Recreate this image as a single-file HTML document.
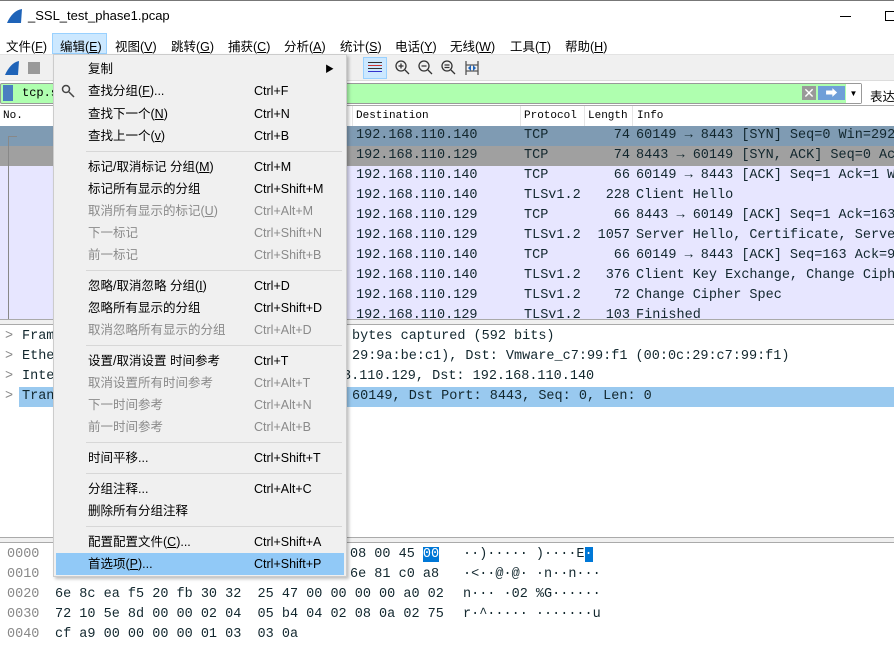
<!DOCTYPE html>
<html><head><meta charset="utf-8"><style>
*{margin:0;padding:0;box-sizing:border-box}
body{width:894px;height:626px;overflow:hidden;background:#fff;position:relative;font-family:"Liberation Sans","Noto Sans CJK SC",sans-serif;font-size:12px;color:#000}
.a{position:absolute;white-space:nowrap}
.mono{font-family:"Liberation Mono","Noto Sans CJK SC",monospace;font-size:13.5px}
.row{position:absolute;left:0;width:894px;height:20px}
.mi{position:absolute;left:0;width:293px;height:22px;line-height:22px}
.mi .l{position:absolute;left:34px}
.mi .r{position:absolute;left:200px}
.dis{color:#8a8a8a}
.sep{position:absolute;left:32px;width:256px;height:1px;background:#d7d7d7}
</style></head><body>
<!-- title -->
<div class="a" style="left:0;top:0;width:894px;height:1px;background:#777"></div>
<svg class="a" style="left:6px;top:8px" width="18" height="16"><path d="M1 15 C4 8 9 2 16 1 L15 15 Z" fill="#1e63b8"/></svg>
<div class="a" style="left:28px;top:8px;font-size:13px">_SSL_test_phase1.pcap</div>
<div class="a" style="left:840px;top:16px;width:11px;height:1px;background:#000"></div>
<div class="a" style="left:885px;top:11px;width:10px;height:10px;border:1px solid #000"></div>
<!-- menubar -->
<div class="a" style="left:0;top:33px;width:894px;height:21px;font-size:12.5px">
<span class="a" style="left:6px;top:3px">文件(<u>F</u>)</span>
<span class="a" style="left:52px;top:0;width:55px;height:21px;background:#cce8ff;border:1px solid #99d1ff"></span>
<span class="a" style="left:60px;top:3px">编辑(<u>E</u>)</span>
<span class="a" style="left:115px;top:3px">视图(<u>V</u>)</span>
<span class="a" style="left:171px;top:3px">跳转(<u>G</u>)</span>
<span class="a" style="left:228px;top:3px">捕获(<u>C</u>)</span>
<span class="a" style="left:284px;top:3px">分析(<u>A</u>)</span>
<span class="a" style="left:340px;top:3px">统计(<u>S</u>)</span>
<span class="a" style="left:395px;top:3px">电话(<u>Y</u>)</span>
<span class="a" style="left:450px;top:3px">无线(<u>W</u>)</span>
<span class="a" style="left:510px;top:3px">工具(<u>T</u>)</span>
<span class="a" style="left:565px;top:3px">帮助(<u>H</u>)</span>
</div>
<!-- toolbar -->
<div class="a" style="left:0;top:54px;width:894px;height:27px;background:#f0f0f0;border-top:1px solid #e3e3e3;border-bottom:1px solid #dcdcdc"></div>
<svg class="a" style="left:4px;top:60px" width="16" height="16"><path d="M1 15 C4 8 9 2 15 1 L14 15 Z" fill="#1e63b8"/></svg>
<div class="a" style="left:28px;top:62px;width:12px;height:12px;background:#999"></div>
<div class="a" style="left:363px;top:57px;width:24px;height:22px;background:#cce8ff;border:1px solid #99d1ff"></div>
<div class="a" style="left:368px;top:62px;width:14px;height:1px;background:#333;box-shadow:0 3px #c33,0 6px #333,0 9px #33c"></div>
<svg class="a" style="left:394px;top:59px" width="90" height="18" fill="none" stroke="#333" stroke-width="1.3"><circle cx="7" cy="7" r="5"/><path d="M11 11l4 4M4.5 7h5M7 4.5v5"/><circle cx="30" cy="7" r="5"/><path d="M34 11l4 4M27.5 7h5"/><circle cx="53" cy="7" r="5"/><path d="M57 11l4 4M50.5 6h5M50.5 8.5h5"/><path d="M72 2v14M84 2v14M72 6h12M72 12h12" stroke="#555"/><path d="M74 9l3-3v6zM82 9l-3-3v6z" fill="#1e63b8" stroke="none"/></svg>
<!-- filter -->
<div class="a" style="left:0;top:83px;width:862px;height:21px;border:1px solid #999;background:#afffaf;border-radius:2px"></div>
<div class="a" style="left:3px;top:85px;width:10px;height:16px;background:#4a7ec0"></div>
<div class="a mono" style="left:22px;top:86px;font-size:12px">tcp.s</div>
<div class="a" style="left:802px;top:86px;width:14px;height:14px;background:#999;color:#fff;font-size:14px;line-height:14px;text-align:center">✕</div>
<div class="a" style="left:818px;top:86px;width:27px;height:14px;background:#6f9fd8;color:#fff;font-size:12px;line-height:14px;text-align:center">➡</div>
<div class="a" style="left:846px;top:84px;width:15px;height:19px;background:#fff;font-size:8px;line-height:19px;text-align:center">▼</div>
<div class="a" style="left:870px;top:86px;font-size:12.5px">表达</div>
<!-- packet list header -->
<div class="a" style="left:0;top:105px;width:894px;height:1px;background:#aaa"></div>
<div class="a mono" style="left:0;top:106px;width:894px;height:20px;font-size:11px;line-height:20px">
<span class="a" style="left:3px">No.</span><span class="a" style="left:356px">Destination</span><span class="a" style="left:524px">Protocol</span><span class="a" style="left:588px">Length</span><span class="a" style="left:637px">Info</span>
<span class="a" style="left:352px;top:0;width:1px;height:20px;background:#e5e5e5"></span><span class="a" style="left:520px;top:0;width:1px;height:20px;background:#e5e5e5"></span><span class="a" style="left:584px;top:0;width:1px;height:20px;background:#e5e5e5"></span><span class="a" style="left:632px;top:0;width:1px;height:20px;background:#e5e5e5"></span>
</div>
<div class="a mono" style="left:0;top:126px;width:894px;height:193px;background:#e7e6ff;overflow:hidden;color:#12272e">
<div class="row" style="top:0;background:#7f9bb3"></div>
<div class="row" style="top:20px;background:#a0a0a0"></div>
<div class="a" style="left:8px;top:10px;width:1px;height:190px;background:#888"></div><div class="a" style="left:8px;top:10px;width:9px;height:1px;background:#888"></div>
<div style="position:absolute;left:0;top:0;width:894px;line-height:20px">
<div class="row" style="top:0"><span class="a" style="left:356px">192.168.110.140</span><span class="a" style="left:524px">TCP</span><span class="a" style="right:264px">74</span><span class="a" style="left:636px">60149 → 8443 [SYN] Seq=0 Win=2920</span></div>
<div class="row" style="top:20px"><span class="a" style="left:356px">192.168.110.129</span><span class="a" style="left:524px">TCP</span><span class="a" style="right:264px">74</span><span class="a" style="left:636px">8443 → 60149 [SYN, ACK] Seq=0 Ack</span></div>
<div class="row" style="top:40px"><span class="a" style="left:356px">192.168.110.140</span><span class="a" style="left:524px">TCP</span><span class="a" style="right:264px">66</span><span class="a" style="left:636px">60149 → 8443 [ACK] Seq=1 Ack=1 Wi</span></div>
<div class="row" style="top:60px"><span class="a" style="left:356px">192.168.110.140</span><span class="a" style="left:524px">TLSv1.2</span><span class="a" style="right:264px">228</span><span class="a" style="left:636px">Client Hello</span></div>
<div class="row" style="top:80px"><span class="a" style="left:356px">192.168.110.129</span><span class="a" style="left:524px">TCP</span><span class="a" style="right:264px">66</span><span class="a" style="left:636px">8443 → 60149 [ACK] Seq=1 Ack=163</span></div>
<div class="row" style="top:100px"><span class="a" style="left:356px">192.168.110.129</span><span class="a" style="left:524px">TLSv1.2</span><span class="a" style="right:264px">1057</span><span class="a" style="left:636px">Server Hello, Certificate, Server</span></div>
<div class="row" style="top:120px"><span class="a" style="left:356px">192.168.110.140</span><span class="a" style="left:524px">TCP</span><span class="a" style="right:264px">66</span><span class="a" style="left:636px">60149 → 8443 [ACK] Seq=163 Ack=99</span></div>
<div class="row" style="top:140px"><span class="a" style="left:356px">192.168.110.140</span><span class="a" style="left:524px">TLSv1.2</span><span class="a" style="right:264px">376</span><span class="a" style="left:636px">Client Key Exchange, Change Ciphe</span></div>
<div class="row" style="top:160px"><span class="a" style="left:356px">192.168.110.129</span><span class="a" style="left:524px">TLSv1.2</span><span class="a" style="right:264px">72</span><span class="a" style="left:636px">Change Cipher Spec</span></div>
<div class="row" style="top:180px"><span class="a" style="left:356px">192.168.110.129</span><span class="a" style="left:524px">TLSv1.2</span><span class="a" style="right:264px">103</span><span class="a" style="left:636px">Finished</span></div>
</div></div>
<div class="a" style="left:0;top:319px;width:894px;height:6px;background:#f0f0f0;border-top:1px solid #aaa;border-bottom:1px solid #aaa"></div>
<!-- details -->
<div class="a" style="left:19px;top:387px;width:875px;height:20px;background:#99c9ef"></div>
<div class="a mono" style="left:0;top:327px;width:894px;line-height:20px;color:#12272e">
<div class="row" style="top:0"><span class="a" style="left:5px;color:#888">&gt;</span><span class="a" style="left:22px">Fram</span><span class="a" style="left:352px">bytes captured (592 bits)</span></div>
<div class="row" style="top:20px"><span class="a" style="left:5px;color:#888">&gt;</span><span class="a" style="left:22px">Ethe</span><span class="a" style="left:352px">29:9a:be:c1), Dst: Vmware_c7:99:f1 (00:0c:29:c7:99:f1)</span></div>
<div class="row" style="top:40px"><span class="a" style="left:5px;color:#888">&gt;</span><span class="a" style="left:22px">Inte</span><span class="a" style="left:343px">3.110.129, Dst: 192.168.110.140</span></div>
<div class="row" style="top:60px"><span class="a" style="left:5px;color:#888">&gt;</span><span class="a" style="left:22px">Tran</span><span class="a" style="left:352px">60149, Dst Port: 8443, Seq: 0, Len: 0</span></div>
</div>
<div class="a" style="left:0;top:537px;width:894px;height:6px;background:#f0f0f0;border-top:1px solid #aaa;border-bottom:1px solid #aaa"></div>
<!-- bytes -->
<div class="a mono" style="left:0;top:545px;width:894px;line-height:20px;color:#12272e">
<div class="row" style="top:0"><span class="a" style="left:7px;color:#888">0000</span><span class="a" style="left:350px">08 00 45 <span style="background:#0078d7;color:#fff">00</span></span><span class="a" style="left:463px">··)····· )····E<span style="background:#0078d7;color:#fff">·</span></span></div>
<div class="row" style="top:20px"><span class="a" style="left:7px;color:#888">0010</span><span class="a" style="left:350px">6e 81 c0 a8</span><span class="a" style="left:463px">·&lt;··@·@· ·n··n···</span></div>
<div class="row" style="top:40px"><span class="a" style="left:7px;color:#888">0020</span><span class="a" style="left:55px">6e 8c ea f5 20 fb 30 32&nbsp; 25 47 00 00 00 00 a0 02</span><span class="a" style="left:463px">n··· ·02 %G······</span></div>
<div class="row" style="top:60px"><span class="a" style="left:7px;color:#888">0030</span><span class="a" style="left:55px">72 10 5e 8d 00 00 02 04&nbsp; 05 b4 04 02 08 0a 02 75</span><span class="a" style="left:463px">r·^····· ·······u</span></div>
<div class="row" style="top:80px"><span class="a" style="left:7px;color:#888">0040</span><span class="a" style="left:55px">cf a9 00 00 00 00 01 03&nbsp; 03 0a</span></div>
</div>
<!-- dropdown menu -->
<div class="a" style="left:53px;top:54px;width:294px;height:523px;background:#f0f0f0;border:1px solid #ccc;box-shadow:2px 2px 3px rgba(0,0,0,.25);font-size:12.5px">
<div class="mi" style="top:3px"><span class="l">复制</span><span class="a" style="left:271px;font-size:9px">▶</span></div>
<svg class="a" style="left:7px;top:29px" width="14" height="14" fill="none" stroke="#444" stroke-width="1.5"><circle cx="5" cy="5" r="3.5"/><path d="M8 8l5 5"/></svg>
<div class="mi" style="top:25px"><span class="l">查找分组(<u>F</u>)...</span><span class="r">Ctrl+F</span></div>
<div class="mi" style="top:48px"><span class="l">查找下一个(<u>N</u>)</span><span class="r">Ctrl+N</span></div>
<div class="mi" style="top:70px"><span class="l">查找上一个(<u>v</u>)</span><span class="r">Ctrl+B</span></div>
<div class="sep" style="top:96px"></div>
<div class="mi" style="top:101px"><span class="l">标记/取消标记 分组(<u>M</u>)</span><span class="r">Ctrl+M</span></div>
<div class="mi" style="top:123px"><span class="l">标记所有显示的分组</span><span class="r">Ctrl+Shift+M</span></div>
<div class="mi dis" style="top:145px"><span class="l">取消所有显示的标记(<u>U</u>)</span><span class="r">Ctrl+Alt+M</span></div>
<div class="mi dis" style="top:167px"><span class="l">下一标记</span><span class="r">Ctrl+Shift+N</span></div>
<div class="mi dis" style="top:189px"><span class="l">前一标记</span><span class="r">Ctrl+Shift+B</span></div>
<div class="sep" style="top:215px"></div>
<div class="mi" style="top:220px"><span class="l">忽略/取消忽略 分组(<u>I</u>)</span><span class="r">Ctrl+D</span></div>
<div class="mi" style="top:242px"><span class="l">忽略所有显示的分组</span><span class="r">Ctrl+Shift+D</span></div>
<div class="mi dis" style="top:264px"><span class="l">取消忽略所有显示的分组</span><span class="r">Ctrl+Alt+D</span></div>
<div class="sep" style="top:290px"></div>
<div class="mi" style="top:295px"><span class="l">设置/取消设置 时间参考</span><span class="r">Ctrl+T</span></div>
<div class="mi dis" style="top:317px"><span class="l">取消设置所有时间参考</span><span class="r">Ctrl+Alt+T</span></div>
<div class="mi dis" style="top:339px"><span class="l">下一时间参考</span><span class="r">Ctrl+Alt+N</span></div>
<div class="mi dis" style="top:361px"><span class="l">前一时间参考</span><span class="r">Ctrl+Alt+B</span></div>
<div class="sep" style="top:387px"></div>
<div class="mi" style="top:392px"><span class="l">时间平移...</span><span class="r">Ctrl+Shift+T</span></div>
<div class="sep" style="top:418px"></div>
<div class="mi" style="top:423px"><span class="l">分组注释...</span><span class="r">Ctrl+Alt+C</span></div>
<div class="mi" style="top:445px"><span class="l">删除所有分组注释</span></div>
<div class="sep" style="top:471px"></div>
<div class="mi" style="top:476px"><span class="l">配置配置文件(<u>C</u>)...</span><span class="r">Ctrl+Shift+A</span></div>
<div class="mi" style="top:498px;left:2px;width:288px;background:#91c9f7"><span class="l" style="left:32px">首选项(<u>P</u>)...</span><span class="r" style="left:198px">Ctrl+Shift+P</span></div>
</div>
</body></html>
